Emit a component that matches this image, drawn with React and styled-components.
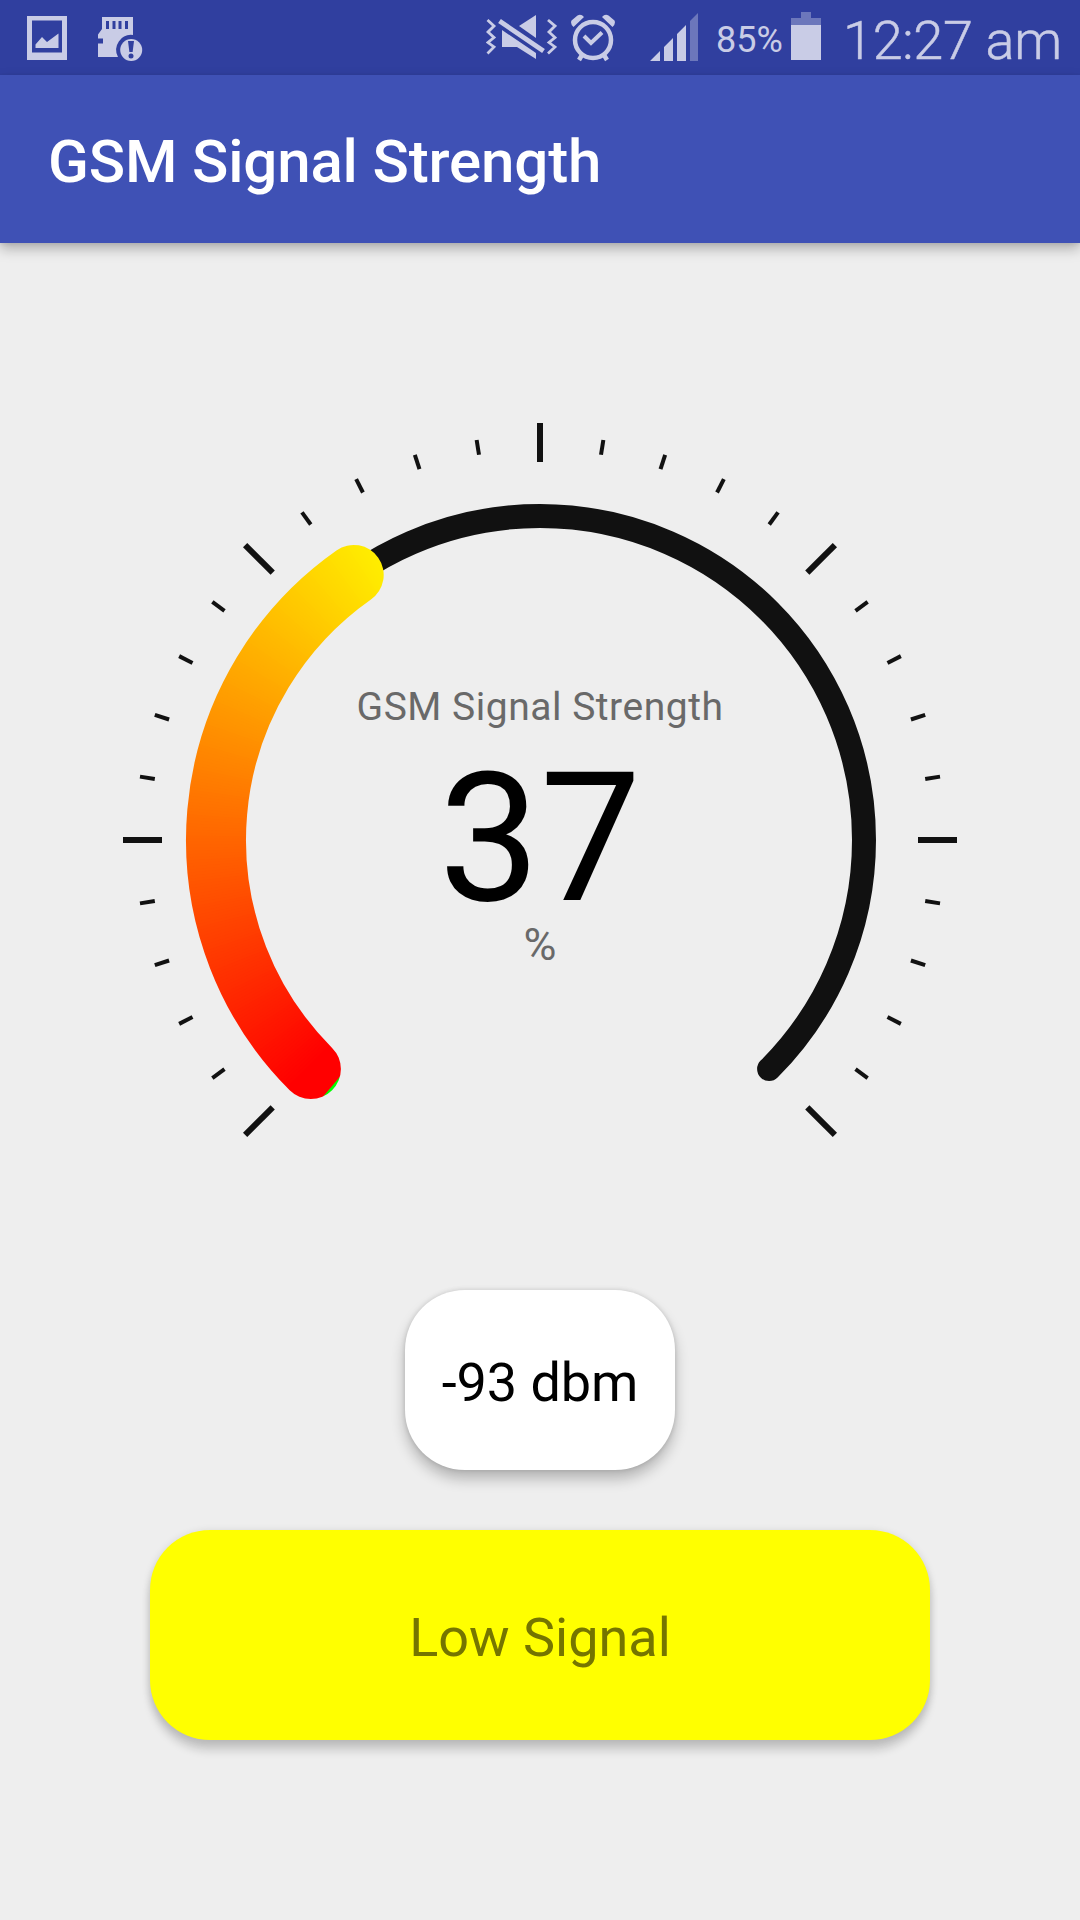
import React from 'react';
import styled, { createGlobalStyle } from 'styled-components';

const INK = '#c9cce6';

const Global = createGlobalStyle`
  * { box-sizing: border-box; }
  body { margin: 0; background: #eeeeee; font-family: Roboto, sans-serif; }
`;

const Screen = styled.div`
  width: 1080px;
  height: 1920px;
  background: #eeeeee;
  display: flex;
  flex-direction: column;
  overflow: hidden;
`;

const StatusBar = styled.div`
  height: 75px;
  flex: none;
  background: #303f9f;
  color: ${INK};
  display: flex;
  justify-content: space-between;
  padding: 0 19px 0 27px;
`;

const StatusGroup = styled.div`
  display: flex;
`;

const StatusIcon = styled.svg`
  display: block;
  flex: none;
  height: 75px;
  margin-right: ${(p) => p.$gap || 0}px;
`;

const StatusText = styled.span`
  font-size: ${(p) => p.$size}px;
  font-weight: ${(p) => p.$weight || 400};
  line-height: ${(p) => p.$line}px;
  letter-spacing: ${(p) => p.$spacing || 0}px;
  -webkit-text-stroke: ${(p) => p.$stroke || 0}px ${INK};
  width: ${(p) => p.$width}px;
  white-space: nowrap;
`;

const AppBar = styled.header`
  height: 168px;
  flex: none;
  background: #3f51b5;
  padding: 5px 48px 0;
  display: flex;
  align-items: center;
  position: relative;
  box-shadow: 0 6px 12px rgba(0, 0, 0, 0.26), 0 1px 4px rgba(0, 0, 0, 0.08);
`;

const Title = styled.h1`
  margin: 0;
  color: #fff;
  font-size: 60px;
  line-height: 70px;
  font-weight: 500;
  letter-spacing: -0.15px;
  white-space: nowrap;
`;

const Main = styled.main`
  display: flex;
  flex-direction: column;
  align-items: center;
  padding-top: 177px;
`;

const Gauge = styled.section`
  display: grid;
  width: 840px;
  height: 840px;
  margin-bottom: 30px;
`;

const Dial = styled.svg`
  grid-area: 1 / 1;
  display: block;
`;

const Readout = styled.div`
  grid-area: 1 / 1;
  display: flex;
  flex-direction: column;
  align-items: center;
  padding-top: 262px;
  color: #696969;
`;

const ReadoutLabel = styled.div`
  font-size: 39px;
  line-height: 50px;
  letter-spacing: 0.52px;
`;

const ReadoutValue = styled.div`
  color: #000;
  font-size: 180px;
  line-height: 150px;
  margin-top: 32px;
`;

const ReadoutUnit = styled.div`
  font-size: 45px;
  line-height: 50px;
  margin-top: 6px;
`;

const Card = styled.div`
  width: ${(p) => p.$width}px;
  height: ${(p) => p.$height}px;
  background: ${(p) => p.$bg};
  color: ${(p) => p.$color};
  border-radius: 60px;
  padding-top: 5px;
  margin-bottom: 60px;
  display: flex;
  align-items: center;
  justify-content: center;
  font-size: 54px;
  line-height: 64px;
  letter-spacing: ${(p) => p.$spacing || 0}px;
  box-shadow: ${(p) =>
    p.$raised
      ? '0 11px 9px rgba(0, 0, 0, 0.14), 0 2px 9px rgba(0, 0, 0, 0.14)'
      : '0 9px 14px rgba(0, 0, 0, 0.24), 0 0 5px rgba(0, 0, 0, 0.14)'};
`;

const CX = 420;
const CY = 420;
const R = 324;
const START = 135;
const SWEEP = 270;

const polar = (deg, r) => {
  const a = (deg * Math.PI) / 180;
  return [CX + r * Math.cos(a), CY + r * Math.sin(a)];
};

const arc = (from, to) => {
  const [x1, y1] = polar(from, R);
  const [x2, y2] = polar(to, R);
  return `M${x1} ${y1}A${R} ${R} 0 ${to - from > 180 ? 1 : 0} 1 ${x2} ${y2}`;
};

const wedge = (from, to) =>
  [[CX, CY], polar(from, 400), polar(to, 400)].map((p) => p.join(',')).join(' ');

function Ticks() {
  return Array.from({ length: 31 }, (_, i) => {
    const major = i % 5 === 0;
    const deg = START + i * 9;
    const [x1, y1] = polar(deg, major ? 378 : 390);
    const [x2, y2] = polar(deg, major ? 417 : 405);
    return <line key={i} x1={x1} y1={y1} x2={x2} y2={y2} stroke="#111" strokeWidth={major ? 6 : 4} />;
  });
}

function Progress({ percent }) {
  const end = START + (SWEEP * percent) / 100;
  const wedges = [];
  for (let d = 130.2; d < end + 7; d += 0.5) {
    const t = Math.min(1, Math.max(0, (d - START) / 112.5));
    wedges.push(
      <polygon key={d} points={wedge(d, d + 1.2)} fill={`rgb(255,${Math.round(255 * t)},0)`} />
    );
  }
  return (
    <g mask="url(#progress)">
      <polygon points={wedge(126, 130.5)} fill="#00ff00" />
      {wedges}
    </g>
  );
}

function SignalGauge({ percent, label }) {
  return (
    <Gauge>
      <Dial width="840" height="840" viewBox="0 0 840 840">
        <mask id="progress" maskUnits="userSpaceOnUse" x="0" y="0" width="840" height="840">
          <path
            d={arc(START, START + (SWEEP * percent) / 100)}
            fill="none"
            stroke="#fff"
            strokeWidth="60"
            strokeLinecap="round"
          />
        </mask>
        <Ticks />
        <path d={arc(START, START + SWEEP)} fill="none" stroke="#111" strokeWidth="24" strokeLinecap="round" />
        <Progress percent={percent} />
      </Dial>
      <Readout>
        <ReadoutLabel>{label}</ReadoutLabel>
        <ReadoutValue>{percent}</ReadoutValue>
        <ReadoutUnit>%</ReadoutUnit>
      </Readout>
    </Gauge>
  );
}

function PictureIcon() {
  return (
    <StatusIcon width="40" viewBox="27 0 40 75" fill={INK} $gap={31}>
      <path fillRule="evenodd" d="M27 16H67V60H27ZM32 20.5V52.5H62V20.5Z" />
      <path d="M35.5 48V44.5L42 37L47 42L58.5 33.5V48Z" />
    </StatusIcon>
  );
}

function SdCardIcon() {
  return (
    <StatusIcon width="45" viewBox="98 0 45 75" fill={INK}>
      <path
        fillRule="evenodd"
        d="M102 17H133V35A15 15 0 0 0 118 57H98V43.5H103V38.5H98V34.5L102 29ZM106 21V29H109V21ZM112.5 21V29H115.5V21ZM118.5 21V29H121.5V21ZM125 21V29H128V21Z"
      />
      <circle cx="131.2" cy="50" r="11" />
      <path d="M128 41H134L132.6 52H129.400Z" fill="#303f9f" />
      <circle cx="131" cy="56" r="2.5" fill="#303f9f" />
    </StatusIcon>
  );
}

function MuteIcon() {
  return (
    <StatusIcon width="71" viewBox="486 0 71 75" fill={INK} $gap={14}>
      <path
        fill="none"
        stroke={INK}
        strokeWidth="2.8"
        d="M487.5 20L494 26L488 32L494 37.500L488 42.500L494 47L487.500 53.500M548 20L555 26L549 32L555 37.500L549 42.500L555 47L548 53.500"
      />
      <path d="M519 26L536 15V38Z" />
      <path d="M502 30L536 53V59L517 47H502Z" />
      <path d="M499.500 21L543.500 51" stroke={INK} strokeWidth="4.800" />
    </StatusIcon>
  );
}

function AlarmIcon() {
  return (
    <StatusIcon width="44" viewBox="571 0 44 75" fill="none" stroke={INK} $gap={35}>
      <circle cx="593" cy="40" r="18" strokeWidth="4.5" />
      <path d="M584 36L591 43L602 32.5" strokeWidth="4" />
      <path d="M582 55L579 60M604 55L607 60" strokeWidth="4.5" />
      <path
        d="M573.500 27Q570 24 571.500 20.500L577.500 15.500Q581 13.500 584 17ZM612.500 27Q616 24 614.500 20.500L608.500 15.500Q605 13.500 602 17Z"
        fill={INK}
        stroke="none"
      />
    </StatusIcon>
  );
}

function NetworkIcon() {
  return (
    <StatusIcon width="48" viewBox="650 0 48 75" fill={INK} $gap={18}>
      <path d="M650 61L660 51V61ZM664 61V47L673 38V61ZM677 61V34L686 25V61Z" />
      <path d="M690 61V21L698 13V61Z" opacity="0.4" />
    </StatusIcon>
  );
}

function BatteryIcon() {
  return (
    <StatusIcon width="30" viewBox="791 0 30 75" fill={INK} $gap={22}>
      <path d="M791 25V18H801V12H811V18H821V25Z" opacity="0.4" />
      <path d="M791 25H821V60H791Z" />
    </StatusIcon>
  );
}

export default function App() {
  return (
    <Screen>
      <Global />
      <StatusBar>
        <StatusGroup>
          <PictureIcon />
          <SdCardIcon />
        </StatusGroup>
        <StatusGroup>
          <MuteIcon />
          <AlarmIcon />
          <NetworkIcon />
          <StatusText $size={36} $line={80} $width={75}>85%</StatusText>
          <BatteryIcon />
          <StatusText $size={54} $line={81} $weight={300} $width={218} $spacing={-0.3} $stroke={0.5}>
            12:27 am
          </StatusText>
        </StatusGroup>
      </StatusBar>
      <AppBar>
        <Title>GSM Signal Strength</Title>
      </AppBar>
      <Main>
        <SignalGauge percent={37} label="GSM Signal Strength" />
        <Card $width={270} $height={180} $bg="#fff" $color="#000" $spacing={-0.1}>-93 dbm</Card>
        <Card $width={780} $height={210} $bg="#ffff00" $color="#757500" $raised>Low Signal</Card>
      </Main>
    </Screen>
  );
}
